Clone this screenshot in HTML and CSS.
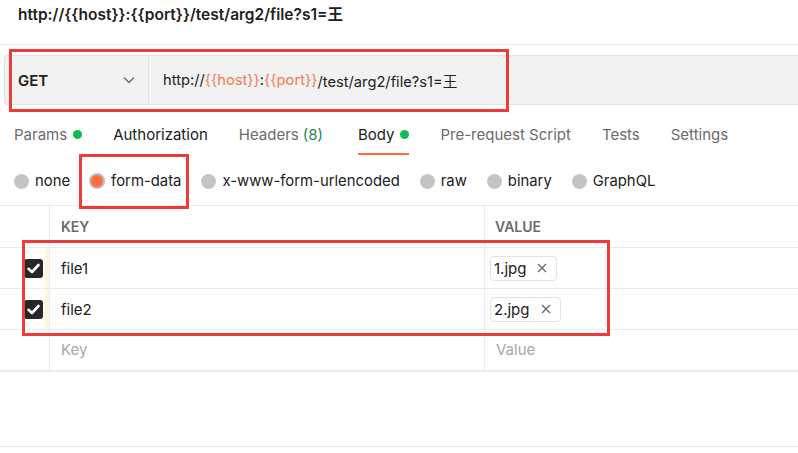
FILE: index.html
```html
<!DOCTYPE html>
<html lang="en">
<head>
<meta charset="utf-8">
<title>Request</title>
<link rel="stylesheet" href="styles.css">
</head>
<body>
<div class="page">
  <div class="title">http://{{host}}:{{port}}/test/arg2/file?s1=王</div>

  <div class="request">
    <div class="method">
      <span class="method-name">GET</span>
      <svg class="chevron" width="12" height="8" viewBox="0 0 12 8"><path d="M1 1.5 L6 6.5 L11 1.5" fill="none" stroke="#6b6b6b" stroke-width="1.3"/></svg>
    </div>
    <div class="url">http://<span class="var">{{host}}</span>:<span class="var">{{port}}</span>/test/arg2/file?s1=王</div>
  </div>

  <div class="tabs">
    <div class="tab">Params <span class="dot"></span></div>
    <div class="tab dark">Authorization</div>
    <div class="tab wide">Headers <span class="count">(8)</span></div>
    <div class="tab dark active">Body <span class="dot"></span></div>
    <div class="tab">Pre-request Script</div>
    <div class="tab">Tests</div>
    <div class="tab">Settings</div>
  </div>

  <div class="types">
    <div class="type"><span class="radio"></span>none</div>
    <div class="type"><span class="radio on"></span>form-data</div>
    <div class="type"><span class="radio"></span>x-www-form-urlencoded</div>
    <div class="type"><span class="radio"></span>raw</div>
    <div class="type"><span class="radio"></span>binary</div>
    <div class="type"><span class="radio"></span>GraphQL</div>
  </div>

  <div class="table">
    <div class="row head">
      <div class="cell gutter"></div>
      <div class="cell key">KEY</div>
      <div class="cell value">VALUE</div>
    </div>
    <div class="row">
      <div class="cell gutter"><span class="check"><svg width="19" height="19" viewBox="0 0 19 19"><path d="M4.5 9.8 L8 13 L14.5 6" fill="none" stroke="#fff" stroke-width="2.6" stroke-linecap="round" stroke-linejoin="round"/></svg></span><span class="handle"></span></div>
      <div class="cell key">file1</div>
      <div class="cell value"><span class="chip">1.jpg<svg class="x" width="10" height="10" viewBox="0 0 10 10"><path d="M1 1 L9 9 M9 1 L1 9" stroke="#6b6b6b" stroke-width="1.4"/></svg></span></div>
    </div>
    <div class="row">
      <div class="cell gutter"><span class="check"><svg width="19" height="19" viewBox="0 0 19 19"><path d="M4.5 9.8 L8 13 L14.5 6" fill="none" stroke="#fff" stroke-width="2.6" stroke-linecap="round" stroke-linejoin="round"/></svg></span><span class="handle"></span></div>
      <div class="cell key">file2</div>
      <div class="cell value"><span class="chip">2.jpg<svg class="x" width="10" height="10" viewBox="0 0 10 10"><path d="M1 1 L9 9 M9 1 L1 9" stroke="#6b6b6b" stroke-width="1.4"/></svg></span></div>
    </div>
    <div class="row">
      <div class="cell gutter"></div>
      <div class="cell key placeholder">Key</div>
      <div class="cell value placeholder">Value</div>
    </div>
  </div>
  <div class="footer-space"></div>

  <div class="mark mark-request"></div>
  <div class="mark mark-formdata"></div>
  <div class="mark mark-rows"></div>
</div>
</body>
</html>
```

FILE: styles.css
```css
* { box-sizing: border-box; }
html, body { margin: 0; padding: 0; background: #fff; }
body {
  font-family: Inter, "Noto Sans CJK SC", sans-serif;
  font-size: 15px;
  color: #212121;
}
.page { position: relative; width: 798px; height: 453px; overflow: hidden; }

.title {
  height: 45px;
  padding: 5px 0 0 18px;
  font-weight: 600;
  font-size: 15.5px;
  line-height: 20px;
  border-bottom: 1px solid #ebebeb;
}

.request {
  display: flex;
  height: 50px;
  margin: 10px 0 0 4px;
  background: #f2f2f2;
  border: 1px solid #e3e3e3;
  border-right: none;
  border-radius: 4px 0 0 4px;
}
.method {
  width: 144px;
  display: flex;
  align-items: center;
  justify-content: space-between;
  padding: 0 13px 0 13px;
  border-right: 1px solid #e0e0e0;
}
.method-name { font-weight: 600; font-size: 15px; }
.url {
  display: flex;
  align-items: center;
  padding-left: 14px;
  font-size: 14.7px;
  color: #212121;
}
.var { color: #f47a4e; }

.tabs {
  display: flex;
  height: 50px;
  padding: 0 0 0 14px;
}
.tab {
  display: flex;
  align-items: center;
  margin-right: 31px;
  padding-top: 8px;
  color: #6b6b6b;
  font-size: 15px;
  height: 100%;
  position: relative;
}
.tab.wide { margin-right: 35px; }
.tab.dark { color: #212121; }
.tab.active::after {
  content: "";
  position: absolute;
  left: 0; right: 0;
  bottom: 0px;
  height: 2px;
  background: #ff6c37;
}
.dot {
  display: inline-block;
  width: 9px; height: 9px;
  border-radius: 50%;
  background: #0cbb52;
  margin-left: 6px;
}
.count { color: #1d8a52; margin-left: 4px; }

.types {
  display: flex;
  align-items: center;
  height: 51px;
  padding: 2px 0 0 14px;
  border-bottom: 1px solid #ebebeb;
}
.type {
  display: flex;
  align-items: center;
  margin-right: 20px;
  font-size: 14.85px;
  color: #212121;
}
.radio {
  width: 15px; height: 15px;
  border-radius: 50%;
  background: #c4c4c4;
  margin-right: 6px;
}
.radio.on {
  width: 16px; height: 16px;
  background: #ff6c37;
  border: 2px solid #bdbdbd;
  margin-left: -1px;
}

.table { border-bottom: 1px solid #ebebeb; }
.row {
  display: flex;
  height: 41px;
  border-bottom: 1px solid #ebebeb;
}
.row.head { height: 42px; }
.cell {
  display: flex;
  align-items: center;
  font-size: 15px;
}
.gutter {
  width: 50px;
  border-right: 1px solid #ebebeb;
  padding-left: 24px;
  justify-content: space-between;
}
.key { width: 435px; padding-left: 11px; border-right: 1px solid #ebebeb; }
.value { flex: 1; padding-left: 5px; }
.head .cell { font-weight: 600; color: #6b6b6b; font-size: 14px; }
.head .key { padding-left: 11px; }
.head .value { padding-left: 10px; }
.placeholder { color: #a6a6a6; padding-bottom: 2px; }
.value.placeholder { padding-left: 11px; }

.check {
  width: 19px; height: 19px;
  border-radius: 3px;
  background: #262626;
  display: flex;
}
.handle {
  width: 4px;
  height: 100%;
  background: #fdf5dc;
}
.chip {
  display: inline-flex;
  align-items: center;
  height: 25px;
  padding: 0 9px 0 3px;
  border: 1px solid #e3e3e3;
  border-radius: 4px;
  font-size: 15px;
}
.chip .x { margin-left: 11px; }

.footer-space { height: 75px; border-bottom: 1px solid #ebebeb; }

.mark {
  position: absolute;
  border: 3px solid #ef3a3a;
  pointer-events: none;
}
.mark-request { left: 9px; top: 49px; width: 500px; height: 63px; }
.mark-formdata { left: 79px; top: 154px; width: 110px; height: 55px; }
.mark-rows { left: 22px; top: 240px; width: 588px; height: 96px; }
```
